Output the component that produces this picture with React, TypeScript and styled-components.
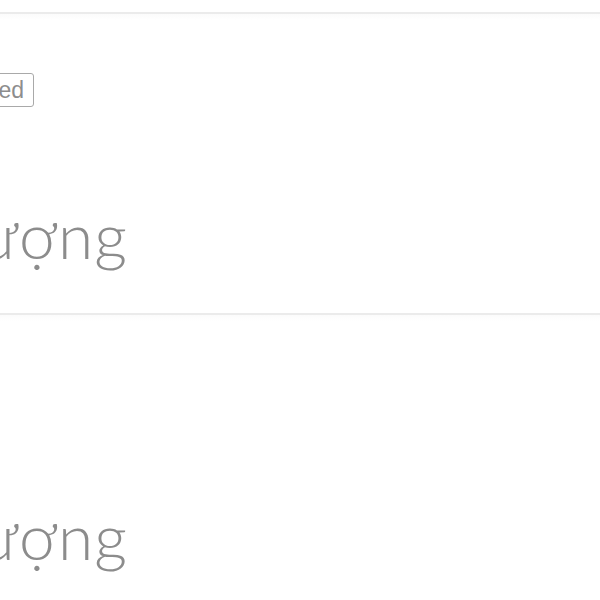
import React from "react";
import styled, { createGlobalStyle } from "styled-components";

const Global = createGlobalStyle`
  html, body { margin: 0; padding: 0; background: #ffffff; }
  body { font-family: Lato, "Noto Sans", sans-serif; overflow: hidden; }
`;

const Page = styled.div`
  padding-top: 12px;
  width: 600px;
  display: flex;
  flex-direction: column;
`;

const Row = styled.section`
  border-top: 2px solid #ebebeb;
  height: 301px;
  display: flex;
  flex-direction: column;
  padding-top: 59px;
  box-sizing: border-box;
  background: linear-gradient(#fbfbfb, #ffffff 6px);
`;

const BadgeSlot = styled.div`
  width: 34px;
  height: 34px;
  display: flex;
  justify-content: flex-end;
`;

const Badge = styled.span`
  box-sizing: border-box;
  height: 34px;
  border: 1px solid #a9a9a9;
  border-radius: 3px;
  padding: 0 9px 0 8px;
  font-family: "Liberation Sans", Arial, sans-serif;
  font-size: 23px;
  line-height: 32px;
  color: #8d8d8d;
  white-space: nowrap;
`;

const ValueSlot = styled.div`
  width: 128px;
  margin-top: 98px;
  display: flex;
  justify-content: flex-end;
`;

const Value = styled.span`
  font-size: 64px;
  font-weight: 300;
  line-height: 60px;
  color: #8c8c8c;
  white-space: nowrap;
  letter-spacing: 1px;
`;

const rows = [
  { badge: "Used", value: "Số lượng" },
  { badge: null, value: "Số lượng" },
];

export default function App() {
  return (
    <>
      <Global />
      <Page>
        {rows.map((r, i) => (
          <Row key={i}>
            <BadgeSlot>{r.badge && <Badge>{r.badge}</Badge>}</BadgeSlot>
            <ValueSlot>
              <Value>{r.value}</Value>
            </ValueSlot>
          </Row>
        ))}
      </Page>
    </>
  );
}
